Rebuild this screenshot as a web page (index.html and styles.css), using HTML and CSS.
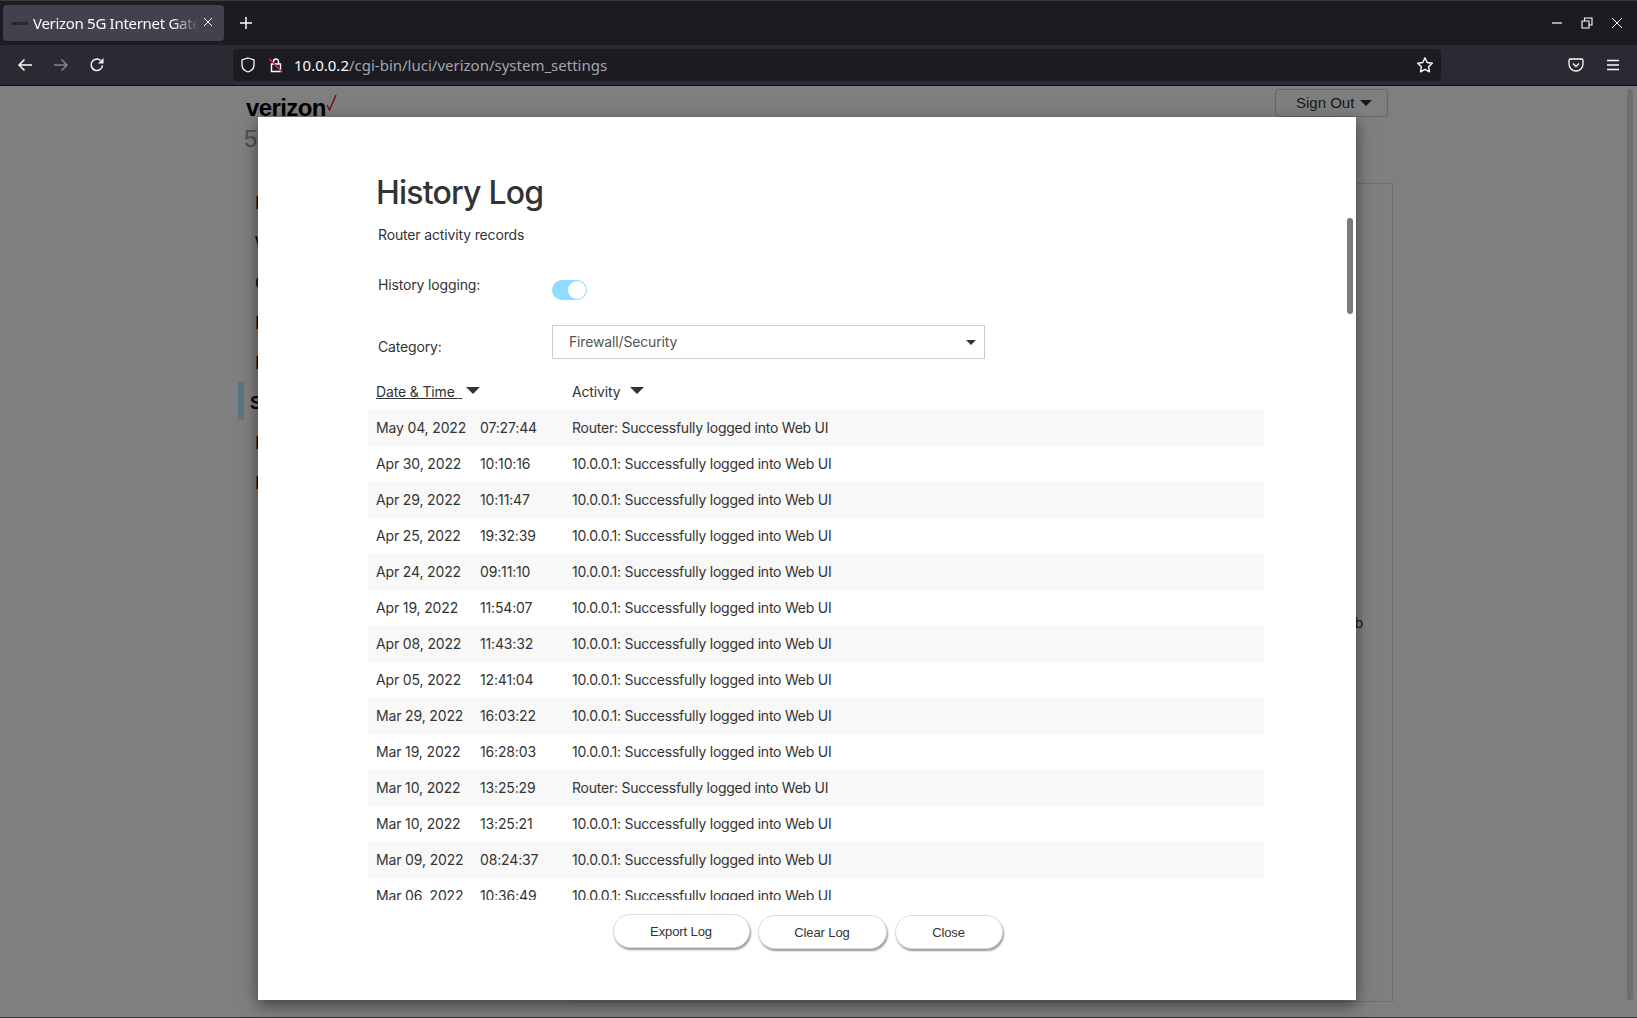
FILE: index.html
```html
<!DOCTYPE html>
<html>
<head>
	<meta charset="utf-8">
	<title>Verizon 5G Internet Gateway</title>
	<link rel="stylesheet" href="styles.css">
</head>
<body>
	<div class="tabbar">
		<div class="tab">
			<span class="tab-favicon">verizon</span>
			<span class="tab-title">Verizon 5G Internet Gateway</span>
			<svg class="tab-close" width="10" height="10" viewBox="0 0 10 10"><path d="M1 1l8 8M9 1l-8 8" stroke="#fbfbfe" stroke-width="1"/></svg>
		</div>
		<svg class="new-tab" width="12" height="12" viewBox="0 0 12 12"><path d="M6 0v12M0 6h12" stroke="#fbfbfe" stroke-width="1.500"/></svg>
		<div class="win-controls">
			<svg width="12" height="12" viewBox="0 0 12 12"><path d="M1 6h10" stroke="#fff" stroke-width="1.200"/></svg>
			<svg width="12" height="12" viewBox="0 0 12 12"><path d="M1 4h7v7H1zM3.500 3.500V1h7.500v7H8.500" fill="none" stroke="#fff" stroke-width="1.100"/></svg>
			<svg width="12" height="12" viewBox="0 0 12 12"><path d="M1 1l10 10M11 1L1 11" stroke="#fff" stroke-width="1"/></svg>
		</div>
	</div>

	<div class="toolbar">
		<div class="nav-btns">
			<svg width="16" height="16" viewBox="0 0 16 16"><path d="M15 8H2M7.500 2.500L2 8l5.500 5.500" fill="none" stroke="#fbfbfe" stroke-width="1.500"/></svg>
			<svg width="16" height="16" viewBox="0 0 16 16"><path d="M1 8h13M8.500 2.500L14 8l-5.500 5.500" fill="none" stroke="#85858c" stroke-width="1.500"/></svg>
			<svg width="16" height="16" viewBox="0 0 16 16"><path d="M13.500 8.500A5.700 5.700 0 1 1 11.500 3.400" fill="none" stroke="#fbfbfe" stroke-width="1.500"/><path d="M14.500 1v5.500H9z" fill="#fbfbfe"/></svg>
		</div>
		<div class="urlbar">
			<svg class="url-shield" width="16" height="16" viewBox="0 0 16 16"><path d="M8 1l6 2v5c0 3.500-2.500 5.800-6 7-3.500-1.200-6-3.500-6-7V3z" fill="none" stroke="#fbfbfe" stroke-width="1.300"/></svg>
			<svg class="url-lock" width="16" height="16" viewBox="0 0 16 16"><path d="M5.500 7V4.500a2.500 2.500 0 0 1 5 0V7M3.500 7h9v7.500h-9z" fill="none" stroke="#fbfbfe" stroke-width="1.400"/><path d="M1.500 2l12.500 13" stroke="#e22850" stroke-width="1.600"/></svg>
			<span class="url-text"><span class="url-host">10.0.0.2</span>/cgi-bin/luci/verizon/system_settings</span>
			<svg class="url-star" width="18" height="18" viewBox="0 0 18 18"><path d="M9 1.800l2.200 4.700 5.100.7-3.700 3.500.9 5.100L9 13.400l-4.500 2.400.9-5.100L1.700 7.200l5.100-.7z" fill="none" stroke="#fbfbfe" stroke-width="1.400" stroke-linejoin="round"/></svg>
		</div>
		<div class="tool-right">
			<svg width="16" height="16" viewBox="0 0 16 16"><path d="M2.500 2h11A1.500 1.500 0 0 1 15 3.500V7A7 7 0 0 1 1 7V3.500A1.500 1.500 0 0 1 2.500 2z" fill="none" stroke="#fbfbfe" stroke-width="1.300"/><path d="M5 6.500l3 3 3-3" fill="none" stroke="#fbfbfe" stroke-width="1.400"/></svg>
			<svg width="14" height="14" viewBox="0 0 14 14"><path d="M1 2.500h12M1 7h12M1 11.500h12" stroke="#fbfbfe" stroke-width="1.300"/></svg>
		</div>
	</div>

	<div class="page">
		<div class="site">
			<div class="site-head">
				<div class="site-brand">
					<div class="logo"><span class="logo-word">verizon</span><svg class="logo-check" width="11" height="17" viewBox="0 0 11 17"><path d="M1 11l2.500 5L10 1" fill="none" stroke="#e8182c" stroke-width="1.500"/></svg></div>
					<div class="site-name">5G Internet Gateway</div>
				</div>
				<div class="signout">Sign Out <span class="caret"></span></div>
			</div>
			<div class="site-body">
				<ul class="sidenav">
					<li>Network</li>
					<li>Wi-Fi</li>
					<li>Connected</li>
					<li>Parental</li>
					<li>Ports</li>
					<li class="sidenav-active">System</li>
					<li>Help</li>
					<li>Logs</li>
				</ul>
				<div class="site-card"><span class="site-card-text">Web</span></div>
			</div>
		</div>
		<div class="page-scroll"><div class="page-thumb"></div></div>
		<div class="overlay"></div>

		<div class="modal">
			<h1 class="modal-title">History Log</h1>
			<p class="modal-sub">Router activity records</p>
			<div class="form-row form-toggle">
				<span class="form-label">History logging:</span>
				<span class="toggle"><span class="toggle-knob"></span></span>
			</div>
			<div class="form-row form-category">
				<span class="form-label">Category:</span>
				<div class="select">Firewall/Security<span class="select-caret"></span></div>
			</div>
			<div class="log-head">
				<span class="log-head-date">Date &amp; Time <span class="sp">&nbsp;</span></span><span class="sort-caret"></span>
				<span class="log-head-act">Activity</span><span class="sort-caret"></span>
			</div>
			<div class="log-list">
				<div class="log-row"><span>May 04, 2022</span><span>07:27:44</span><span>Router: Successfully logged into Web UI</span></div>
				<div class="log-row"><span>Apr 30, 2022</span><span>10:10:16</span><span>10.0.0.1: Successfully logged into Web UI</span></div>
				<div class="log-row"><span>Apr 29, 2022</span><span>10:11:47</span><span>10.0.0.1: Successfully logged into Web UI</span></div>
				<div class="log-row"><span>Apr 25, 2022</span><span>19:32:39</span><span>10.0.0.1: Successfully logged into Web UI</span></div>
				<div class="log-row"><span>Apr 24, 2022</span><span>09:11:10</span><span>10.0.0.1: Successfully logged into Web UI</span></div>
				<div class="log-row"><span>Apr 19, 2022</span><span>11:54:07</span><span>10.0.0.1: Successfully logged into Web UI</span></div>
				<div class="log-row"><span>Apr 08, 2022</span><span>11:43:32</span><span>10.0.0.1: Successfully logged into Web UI</span></div>
				<div class="log-row"><span>Apr 05, 2022</span><span>12:41:04</span><span>10.0.0.1: Successfully logged into Web UI</span></div>
				<div class="log-row"><span>Mar 29, 2022</span><span>16:03:22</span><span>10.0.0.1: Successfully logged into Web UI</span></div>
				<div class="log-row"><span>Mar 19, 2022</span><span>16:28:03</span><span>10.0.0.1: Successfully logged into Web UI</span></div>
				<div class="log-row"><span>Mar 10, 2022</span><span>13:25:29</span><span>Router: Successfully logged into Web UI</span></div>
				<div class="log-row"><span>Mar 10, 2022</span><span>13:25:21</span><span>10.0.0.1: Successfully logged into Web UI</span></div>
				<div class="log-row"><span>Mar 09, 2022</span><span>08:24:37</span><span>10.0.0.1: Successfully logged into Web UI</span></div>
				<div class="log-row"><span>Mar 06, 2022</span><span>10:36:49</span><span>10.0.0.1: Successfully logged into Web UI</span></div>
			</div>
			<div class="modal-btns">
				<button class="btn btn-export">Export Log</button>
				<button class="btn btn-clear">Clear Log</button>
				<button class="btn btn-close">Close</button>
			</div>
			<div class="modal-scroll"></div>
		</div>
	</div>
</body>
</html>
```

FILE: styles.css
```css
* {
	margin: 0;
	padding: 0;
	box-sizing: border-box;
}
html, body {
	height: 100%;
	overflow: hidden;
}
body {
	display: flex;
	flex-direction: column;
	font-family: "Liberation Sans", Arial, sans-serif;
	background: #fff;
	border-bottom: 1px solid #333;
}

/* browser chrome */
.tabbar {
	height: 45px;
	flex: none;
	display: flex;
	align-items: center;
	background: #1c1b22;
	border-top: 1px solid #3b3b3b;
	padding-left: 3px;
}
.tab {
	width: 221px;
	height: 36px;
	display: flex;
	align-items: center;
	background: #42414d;
	border-radius: 4px;
	padding-left: 8px;
}
.tab-favicon {
	width: 17px;
	flex: none;
	overflow: hidden;
	font-size: 5px;
	font-weight: bold;
	color: #0c0c0d;
}
.tab-title {
	margin-left: 5px;
	width: 166px;
	flex: none;
	overflow: hidden;
	white-space: nowrap;
	color: #fbfbfe;
	font: 15px "Noto Sans", sans-serif;
	letter-spacing: -.3px;
	-webkit-mask-image: linear-gradient(to right, #000 84%, transparent);
	mask-image: linear-gradient(to right, #000 84%, transparent);
}
.tab-close {
	margin-left: 4px;
	margin-top: -2px;
	flex: none;
}
.new-tab {
	margin-left: 16px;
}
.win-controls {
	margin-left: auto;
	display: flex;
	gap: 18px;
	padding-right: 14px;
}
.toolbar {
	height: 41px;
	flex: none;
	display: flex;
	align-items: center;
	background: #2b2a33;
	border-bottom: 1px solid #0c0c0d;
	padding-bottom: 1px;
}
.nav-btns {
	width: 233px;
	flex: none;
	display: flex;
	gap: 20px;
	padding-left: 17px;
}
.urlbar {
	width: 1208px;
	height: 32px;
	flex: none;
	display: flex;
	align-items: center;
	background: #1c1b22;
	border-radius: 4px;
	padding: 0 7px;
}
.url-lock {
	margin-left: 12px;
}
.url-text {
	margin-left: 10px;
	font: 15px "Noto Sans", sans-serif;
	color: #a5a5ab;
}
.url-host {
	color: #fbfbfe;
}
.url-star {
	margin-left: auto;
}
.tool-right {
	flex: 1;
	display: flex;
	align-items: center;
	gap: 22px;
	padding-left: 127px;
}

/* page behind the dialog */
.page {
	flex: 1;
	position: relative;
	overflow: hidden;
	background: #fff;
	display: flex;
}
.site {
	flex: 1;
	padding: 3px 0 0 238px;
	display: flex;
	flex-direction: column;
}
.site-head {
	display: flex;
	justify-content: space-between;
	width: 1150px;
	height: 61px;
	flex: none;
}
.site-brand {
	padding-left: 8px;
}
.logo {
	display: flex;
	align-items: flex-start;
	height: 34px;
	padding-top: 4px;
}
.logo-word {
	font-size: 24px;
	font-weight: bold;
	letter-spacing: -.6px;
	color: #000;
	line-height: 30px;
}
.logo-check {
	margin-top: 1px;
}
.site-name {
	font-size: 24px;
	color: #a0a0a0;
	line-height: 28px;
	margin: 2px 0 0 -2px;
}
.signout {
	width: 113px;
	height: 28px;
	border: 1px solid #ccc;
	border-radius: 3px;
	font-size: 15px;
	line-height: 26px;
	color: #333;
	padding-left: 20px;
	white-space: nowrap;
}
.caret {
	display: inline-block;
	margin-left: 1px;
	vertical-align: 2px;
	border-left: 6px solid transparent;
	border-right: 6px solid transparent;
	border-top: 6px solid #333;
}
.site-body {
	flex: 1;
	display: flex;
	margin-top: 33px;
}
.sidenav {
	list-style: none;
	width: 330px;
	flex: none;
}
.sidenav li {
	height: 40px;
	line-height: 40px;
	padding-left: 11px;
	font-size: 18px;
	color: #111;
	border-left: 6px solid transparent;
}
.sidenav .sidenav-active {
	height: 38px;
	line-height: 42px;
	margin: -1px 0 3px;
	padding-left: 6px;
	border-left-color: #b6e8ff;
	background: #fff;
	font-weight: bold;
}
.site-card {
	width: 825px;
	height: 819px;
	border: 1px solid #ddd;
	display: flex;
	align-items: center;
	justify-content: flex-end;
	font-size: 15px;
	color: #333;
	padding: 60px 29px 0 0;
}
.page-scroll {
	position: absolute;
	top: 0;
	right: 0;
	bottom: 0;
	width: 13px;
	background: #fff;
	padding: 3px 4px 17px 3px;
}
.page-thumb {
	height: 100%;
	background: #dcdcdc;
	border-radius: 3px;
}
.overlay {
	position: absolute;
	inset: 0;
	background: rgba(0, 0, 0, .5);
}

/* dialog */
.modal {
	position: absolute;
	left: 258px;
	top: 31px;
	width: 1098px;
	height: 883px;
	background: #fff;
	box-shadow: 0 5px 15px rgba(0, 0, 0, .5);
	display: flex;
	flex-direction: column;
	padding: 56px 92px 0 110px;
	color: #333;
	font-family: Inter, "Liberation Sans", sans-serif;
	font-size: 14px;
	letter-spacing: -.15px;
}
.modal-title {
	font-size: 32px;
	font-weight: 500;
	line-height: 40px;
	letter-spacing: -.8px;
	padding-left: 8px;
}
.modal-sub {
	margin-top: 12px;
	padding-left: 10px;
	line-height: 20px;
}
.form-row {
	display: flex;
	padding-left: 10px;
}
.form-label {
	width: 174px;
	flex: none;
}
.form-toggle {
	margin-top: 31px;
	height: 30px;
}
.toggle {
	width: 35px;
	height: 20px;
	margin-top: 4px;
	border-radius: 10px;
	background: #90dcff;
	display: flex;
	justify-content: flex-end;
	align-items: center;
	padding-right: 1px;
}
.toggle-knob {
	width: 18px;
	height: 18px;
	border-radius: 50%;
	background: #fff;
}
.form-category {
	margin-top: 19px;
	height: 34px;
	align-items: center;
}
.form-category .form-label {
	padding-top: 8px;
}
.select {
	width: 433px;
	height: 34px;
	border: 1px solid #ccc;
	line-height: 32px;
	padding-left: 16px;
	color: #555;
	position: relative;
}
.select-caret {
	position: absolute;
	right: 8px;
	top: 14px;
	border-left: 5px solid transparent;
	border-right: 5px solid transparent;
	border-top: 5px solid #333;
}
.log-head {
	display: flex;
	align-items: center;
	margin-top: 22px;
	height: 20px;
	padding-left: 8px;
}
.log-head-date {
	width: 90px;
	text-decoration: underline;
	white-space: nowrap;
}
.log-head-act {
	margin-left: 92px;
	width: 58px;
}
.sort-caret {
	width: 0;
	height: 0;
	border-left: 7px solid transparent;
	border-right: 7px solid transparent;
	border-top: 7px solid #333;
	margin-bottom: 2px;
}
.log-list {
	height: 490px;
	overflow: hidden;
	margin-top: 9px;
	flex: none;
}
.log-row {
	height: 36px;
	display: grid;
	grid-template-columns: 104px 92px 1fr;
	align-items: center;
	padding: 0 0 2px 8px;
}
.log-row span:nth-child(3) {
	letter-spacing: -.24px;
}
.log-row:nth-child(odd) {
	background: #f8f8f8;
}
.modal-btns {
	display: flex;
	justify-content: center;
	gap: 8px;
	margin-top: 15px;
	padding-right: 37px;
	margin-left: 20px;
}
.btn {
	height: 34px;
	border: 1px solid #ddd;
	border-radius: 17px;
	background: #fff;
	color: #333;
	font-family: "Liberation Sans", Arial, sans-serif;
	font-size: 13px;
	letter-spacing: -.1px;
	box-shadow: 1px 2px 2px rgba(0, 0, 0, .4);
}
.btn-export {
	width: 137px;
	margin-top: -1px;
}
.btn-clear {
	width: 129px;
}
.btn-close {
	width: 108px;
}
.modal-scroll {
	position: absolute;
	right: 3px;
	top: 101px;
	width: 6px;
	height: 96px;
	border-radius: 3px;
	background: #7a7a7a;
}
```
